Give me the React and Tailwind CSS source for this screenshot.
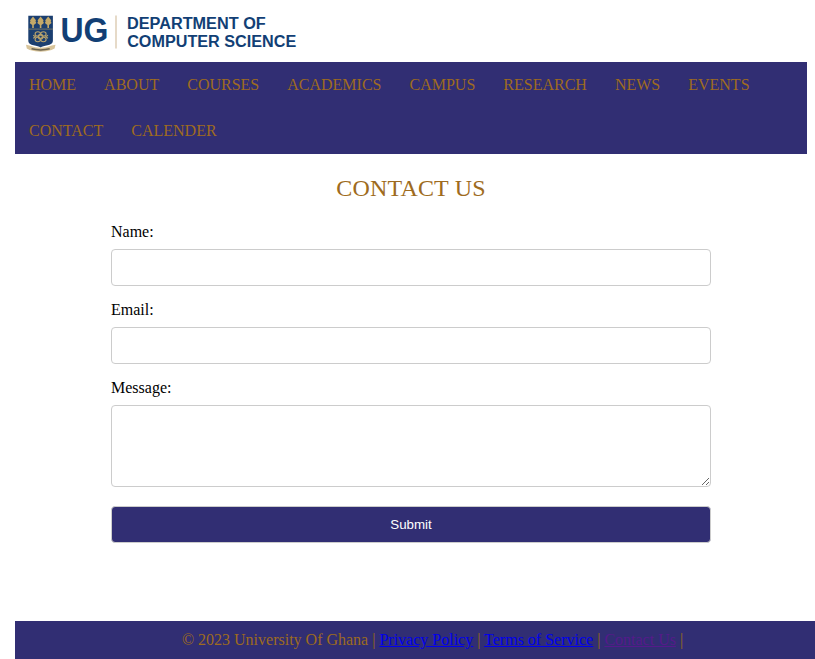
const nav = ["HOME", "ABOUT", "COURSES", "ACADEMICS", "CAMPUS", "RESEARCH", "NEWS", "EVENTS", "CONTACT", "CALENDER"];

function Tree({ x }) {
  return (
    <g transform={`translate(${x} 0)`} fill="#c4a968">
      <path d="M0 .8 L1.8 3 L3.1 4.6 L2.4 5.2 L3.3 7.2 L2.4 8 L.8 9.2 V12.2 H-.8 V9.2 L-2.4 8 L-3.3 7.2 L-2.4 5.2 L-3.1 4.6 L-1.8 3 Z" />
    </g>
  );
}

function Logo() {
  return (
    <svg className="block h-[46px] w-[290px]" viewBox="15 8 290 46" role="img" aria-label="University of Ghana Department of Computer Science">
      <path d="M28.3 15.8H52.9V40.5C52.9 43.5 50.5 44.6 47.5 45.3C44.5 46 42 46.6 40.6 47.6C39.2 46.6 36.7 46 33.7 45.3C30.7 44.6 28.3 43.5 28.3 40.5Z" fill="#1b3f70" />
      <g transform="translate(0 15.8)">
        <Tree x={33} />
        <Tree x={40.6} />
        <Tree x={48.2} />
      </g>
      <path d="M28.3 29.1H52.9" stroke="#8d8668" strokeWidth="0.8" />
      <g fill="none" stroke="#b7a26c" strokeWidth="1.1">
        <ellipse cx="37.8" cy="33.9" rx="2.7" ry="2.2" />
        <ellipse cx="43.4" cy="33.9" rx="2.7" ry="2.2" />
        <ellipse cx="37.8" cy="39.5" rx="2.7" ry="2.2" />
        <ellipse cx="43.4" cy="39.5" rx="2.7" ry="2.2" />
        <circle cx="40.6" cy="36.7" r="2.3" />
        <path d="M33.2 35.2L35.5 36.7L33.2 38.2M48 35.2L45.7 36.7L48 38.2" />
      </g>
      <path d="M26 44.8L29.5 45.6Q40.6 50 51.7 45.6L55.5 44.8L54.6 48.6L51.5 50Q40.6 53.6 29.7 50L26.8 48.6Z" fill="#d8c49a" />
      <path d="M31.5 48.8Q40.6 51 49.7 48.8" fill="none" stroke="#6b6350" strokeWidth="1.5" />
      <g fill="#123f75" fontFamily="'Liberation Sans', Arial, sans-serif" fontWeight="700">
        <text x="60.4" y="41.5" fontSize="34.5" textLength="48" lengthAdjust="spacingAndGlyphs">UG</text>
        <text x="127" y="29" fontSize="16.8" textLength="138.7" lengthAdjust="spacingAndGlyphs">DEPARTMENT OF</text>
        <text x="127.2" y="46.5" fontSize="16.8" textLength="169" lengthAdjust="spacingAndGlyphs">COMPUTER SCIENCE</text>
      </g>
      <path d="M116 15.5V48.5" stroke="#e6dac8" strokeWidth="2" />
    </svg>
  );
}

const field = "block w-full rounded-[4px] border border-[#ccc] bg-white px-2.5 outline-none";

export default function App() {
  return (
    <div className="flex h-[659px] flex-col overflow-hidden bg-white pl-[15px] font-['Liberation_Serif','Times_New_Roman',serif] text-base leading-[18px] text-black">
      <header className="mr-2">
        <div className="h-[62px] pt-2"><Logo /></div>
        <nav className="flex flex-wrap bg-[#312e73]">
          {nav.map((item) => (
            <a key={item} href="#" className="p-3.5 text-[#9e6b20]">{item}</a>
          ))}
        </nav>
      </header>
      <main className="mr-2 grow pt-5">
        <h1 className="text-center text-2xl leading-7 tracking-[0.2px] text-[#9e6b20]">CONTACT US</h1>
        <form className="mx-auto mt-[21px] w-[600px]">
          <label htmlFor="name" className="block">Name:</label>
          <input id="name" className={`${field} mt-2 h-[37px]`} />
          <label htmlFor="email" className="mt-[15px] block">Email:</label>
          <input id="email" className={`${field} mt-2 h-[37px]`} />
          <label htmlFor="message" className="mt-[15px] block">Message:</label>
          <textarea id="message" className={`${field} mt-2 h-[82px] resize`} />
          <button type="button" className="mt-[19px] block h-[37px] w-full rounded-[4px] border border-[#ccc] bg-[#312e73] font-['Liberation_Sans',Arial,sans-serif] text-[13.333px] leading-4 text-white">Submit</button>
        </form>
      </main>
      <footer className="h-[38px] bg-[#312e73] pl-[35px] pt-2.5 text-center text-[#9e6b20]">
        © 2023 University Of Ghana | <a href="#" className="text-[#0000ee] underline">Privacy Policy</a> | <a href="#" className="text-[#0000ee] underline">Terms of Service</a> | <a href="#" className="text-[#551a8b] underline">Contact Us</a> |
      </footer>
    </div>
  );
}
